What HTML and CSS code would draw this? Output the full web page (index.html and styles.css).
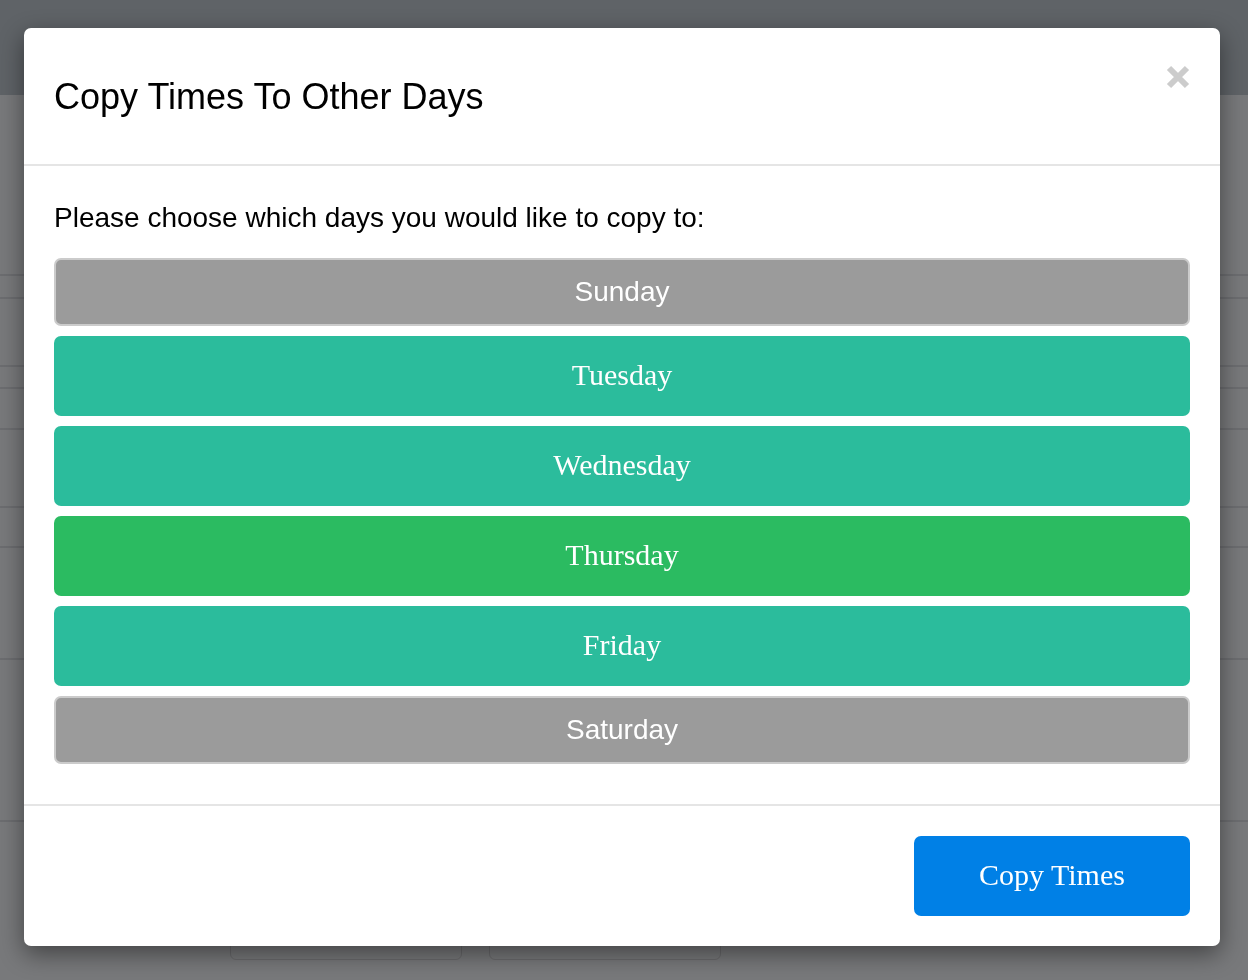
FILE: index.html
```html
<!DOCTYPE html>
<html lang="en">
<head>
<meta charset="utf-8">
<title>Copy Times To Other Days</title>
<link rel="stylesheet" href="styles.css">
</head>
<body>
<div class="page">
  <div class="topbar"></div>
  <div class="rows">
    <div class="row r1"></div>
    <div class="row r2"></div>
    <div class="row r3"></div>
    <div class="row r4"></div>
    <div class="row r5"></div>
    <div class="row r6"></div>
    <div class="row r7"></div>
    <div class="row r8"></div>
    <div class="row r9"></div>
  </div>
  <div class="bottom-actions">
    <div class="ghost"></div>
    <div class="ghost"></div>
  </div>
</div>

<div class="modal">
  <div class="modal-header">
    <h4 class="modal-title">Copy Times To Other Days</h4>
    <button class="close" aria-label="Close">
      <svg width="24" height="24" viewBox="0 0 24 24"><path d="M3 3 L21 21 M21 3 L3 21" stroke="#cccccc" stroke-width="6" stroke-linecap="butt" fill="none"/></svg>
    </button>
  </div>
  <div class="modal-body">
    <p class="lead">Please choose which days you would like to copy to:</p>
    <button class="day day-off">Sunday</button>
    <div class="day day-on">Tuesday</div>
    <div class="day day-on">Wednesday</div>
    <div class="day day-current">Thursday</div>
    <div class="day day-on">Friday</div>
    <button class="day day-off">Saturday</button>
  </div>
  <div class="modal-footer">
    <div class="btn-primary">Copy Times</div>
  </div>
</div>
</body>
</html>
```
FILE: styles.css
```css
html, body {
  margin: 0;
  padding: 0;
  height: 100%;
}
body {
  background: #78797b;
  font-family: "Liberation Sans", Arial, sans-serif;
  overflow: hidden;
}
.page {
  display: flex;
  flex-direction: column;
  height: 980px;
}
.topbar {
  height: 95px;
  background: #5f6367;
  flex: none;
}
.rows {
  display: flex;
  flex-direction: column;
}
.row {
  border-bottom: 2px solid #6c6d70;
  flex: none;
}
.r1 { height: 179px; }
.r2 { height: 21px; }
.r3 { height: 66px; }
.r4 { height: 20px; }
.r5 { height: 39px; }
.r6 { height: 76px; }
.r7 { height: 38px; }
.r8 { height: 110px; }
.r9 { height: 160px; }
.bottom-actions {
  display: flex;
  gap: 27px;
  padding-left: 230px;
  margin-top: 112px;
}
.ghost {
  width: 230px;
  height: 24px;
  border: 1px solid #6a6a6c;
  border-radius: 6px;
}

.modal {
  position: fixed;
  top: 28px;
  left: 24px;
  width: 1196px;
  background: #ffffff;
  border-radius: 7px;
  box-shadow: 0 8px 24px rgba(0, 0, 0, 0.45);
}
.modal-header {
  position: relative;
  padding: 30px;
  border-bottom: 2px solid #e5e5e5;
}
.modal-title {
  margin: 0;
  font-size: 36px;
  font-weight: normal;
  line-height: 78px;
  height: 76px;
  color: #000;
}
.close {
  position: absolute;
  top: 37px;
  right: 30px;
  width: 24px;
  height: 24px;
  padding: 0;
  border: 0;
  background: none;
  display: block;
}
.close svg { display: block; }

.modal-body {
  padding: 30px 30px 30px;
  display: flex;
  flex-direction: column;
}
.lead {
  margin: 0 0 20px;
  font-size: 28px;
  line-height: 44px;
  height: 42px;
  color: #000;
}
.day {
  display: flex;
  align-items: center;
  justify-content: center;
  margin: 0 0 10px;
  border-radius: 7px;
  color: #fff;
  box-sizing: border-box;
}
.day-off {
  height: 68px;
  background: #9b9b9b;
  border: 2px solid #cbcbcb;
  font-family: "Liberation Sans", Arial, sans-serif;
  font-size: 28px;
  width: 100%;
  padding: 0;
}
.day-on, .day-current {
  height: 80px;
  padding-bottom: 3px;
  font-family: "Liberation Serif", "Times New Roman", serif;
  font-size: 30px;
}
.day-on { background: #2bbc9c; }
.day-current { background: #2bbb61; }

.modal-footer {
  padding: 30px;
  border-top: 2px solid #e5e5e5;
  display: flex;
  justify-content: flex-end;
}
.btn-primary {
  width: 276px;
  height: 80px;
  padding-bottom: 3px;
  box-sizing: border-box;
  background: #0080e6;
  border-radius: 7px;
  color: #fff;
  font-family: "Liberation Serif", "Times New Roman", serif;
  font-size: 30px;
  display: flex;
  align-items: center;
  justify-content: center;
}
```
